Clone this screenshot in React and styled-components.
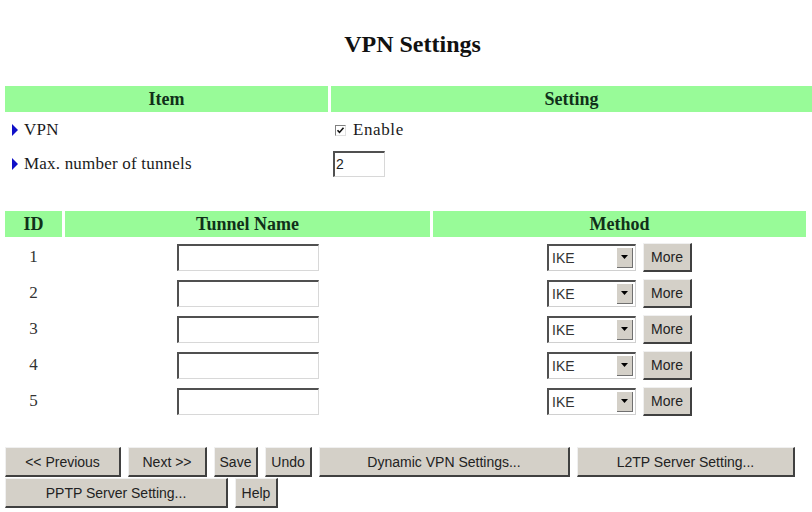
import React from "react";
import styled, { createGlobalStyle } from "styled-components";

const Global = createGlobalStyle`
  html, body { margin: 0; padding: 0; background: #ffffff; }
  body { width: 812px; height: 512px; overflow: hidden; font-family: "Liberation Serif", "Times New Roman", serif; color: #1a1a1a; }
`;

const Page = styled.div`
  display: flex;
  flex-direction: column;
  padding-left: 5px;
`;

const Title = styled.h1`
  margin: 31px 0 0 0;
  padding-left: 8px;
  height: 26px;
  line-height: 26px;
  text-align: center;
  font-size: 24px;
  font-weight: bold;
  font-family: "Liberation Serif", serif;
  color: #111;
`;

const HeaderBar = styled.div`
  display: grid;
  grid-template-columns: ${(p) => p.$cols};
  column-gap: 3px;
  width: ${(p) => p.$w}px;
  margin-top: ${(p) => p.$top}px;
`;

const HeadCell = styled.div`
  height: 26px;
  line-height: 26px;
  background: #98fb98;
  text-align: center;
  font-weight: bold;
  font-size: 18px;
  color: #10301a;
`;

const SettingRow = styled.div`
  display: grid;
  grid-template-columns: 326px 1fr;
  height: 34px;
  align-items: center;
  &:first-of-type { margin-top: 1px; }
`;

const ItemLabel = styled.div`
  display: flex;
  align-items: center;
  gap: 6px;
  padding-left: 7px;
  font-size: 17px;
  color: #1a1a1a;
  letter-spacing: 0.2px;
`;

const Arrow = styled.span`
  width: 0;
  height: 0;
  border-top: 6px solid transparent;
  border-bottom: 6px solid transparent;
  border-left: 6px solid #1010c8;
`;

const SettingCell = styled.div`
  display: flex;
  align-items: center;
  padding-left: ${(p) => p.$pad}px;
  gap: 7px;
  font-size: 17px;
  letter-spacing: 0.6px;
`;

const CheckBox = styled.span`
  width: 11px;
  height: 11px;
  box-sizing: border-box;
  border-top: 1px solid #808080;
  border-left: 1px solid #808080;
  border-right: 1px solid #e0e0e0;
  border-bottom: 1px solid #e0e0e0;
  background: #fff;
  display: flex;
  align-items: center;
  justify-content: center;
`;

const TextBox = styled.div`
  box-sizing: border-box;
  width: ${(p) => p.$w}px;
  height: ${(p) => p.$h}px;
  background: #fff;
  border-top: 2px solid #505050;
  border-left: 2px solid #505050;
  border-right: 1px solid #d8d8d8;
  border-bottom: 1px solid #d8d8d8;
  font-family: "Liberation Sans", Arial, sans-serif;
  font-size: 14px;
  line-height: 22px;
  padding-left: 1px;
  color: #222;
`;

const Tunnels = styled.div`
  display: flex;
  flex-direction: column;
  margin-top: 2px;
  width: 801px;
`;

const TunnelRow = styled.div`
  display: grid;
  grid-template-columns: 57px 365px 373px;
  column-gap: 3px;
  height: 36px;
  align-items: center;
`;

const IdCell = styled.div`
  text-align: center;
  font-size: 17px;
  color: #333;
`;

const Center = styled.div`
  display: flex;
  justify-content: center;
  align-items: center;
  gap: 7px;
`;

const Select = styled.div`
  box-sizing: border-box;
  width: 89px;
  height: 27px;
  display: flex;
  align-items: stretch;
  background: #fff;
  border-top: 2px solid #505050;
  border-left: 2px solid #505050;
  border-right: 1px solid #d0d0d0;
  border-bottom: 1px solid #d0d0d0;
  font-family: "Liberation Sans", Arial, sans-serif;
  font-size: 14px;
  color: #333;
`;

const SelectText = styled.span`
  flex: 1;
  padding-left: 3px;
  line-height: 24px;
`;

const SelectArrow = styled.span`
  width: 15px;
  margin: 2px 2px 2px 0;
  background: #d4d0c8;
  border-right: 1px solid #707070;
  border-bottom: 1px solid #707070;
  display: flex;
  align-items: center;
  justify-content: center;
`;

const Button = styled.button`
  box-sizing: border-box;
  width: ${(p) => p.$w}px;
  height: ${(p) => p.$h || 30}px;
  padding: 0;
  margin: 0;
  background: #d4d0c8;
  border-top: 1px solid #f0f0f0;
  border-left: 1px solid #f0f0f0;
  border-right: 2px solid #404040;
  border-bottom: 2px solid #404040;
  font-family: "Liberation Sans", Arial, sans-serif;
  font-size: 14px;
  color: #222;
  text-align: center;
  cursor: default;
`;

const ButtonBar = styled.div`
  display: flex;
  flex-wrap: wrap;
  column-gap: 7px;
  row-gap: 1px;
  width: 801px;
  margin-top: 28px;
`;

const DownTri = () => (
  <svg width="7" height="4" viewBox="0 0 7 4">
    <path d="M0 0 L7 0 L3.5 4 Z" fill="#000" />
  </svg>
);

const Check = () => (
  <svg width="9" height="9" viewBox="0 0 9 9">
    <path d="M1.5 4.2 L3.5 6.4 L7.5 1.8" stroke="#111" strokeWidth="1.6" fill="none" />
  </svg>
);

const buttons = [
  ["<< Previous", 116],
  ["Next >>", 79],
  ["Save", 44],
  ["Undo", 47],
  ["Dynamic VPN Settings...", 251],
  ["L2TP Server Setting...", 218],
  ["PPTP Server Setting...", 223],
  ["Help", 43],
];

export default function App() {
  return (
    <>
      <Global />
      <Page>
        <Title>VPN Settings</Title>
        <HeaderBar $cols="323px 1fr" $w={807} $top={29}>
          <HeadCell>Item</HeadCell>
          <HeadCell>Setting</HeadCell>
        </HeaderBar>
        <div>
          <SettingRow>
            <ItemLabel>
              <Arrow />
              VPN
            </ItemLabel>
            <SettingCell $pad={4}>
              <CheckBox>
                <Check />
              </CheckBox>
              Enable
            </SettingCell>
          </SettingRow>
          <SettingRow>
            <ItemLabel>
              <Arrow />
              Max. number of tunnels
            </ItemLabel>
            <SettingCell $pad={2}>
              <TextBox $w={52} $h={26}>2</TextBox>
            </SettingCell>
          </SettingRow>
        </div>
        <HeaderBar $cols="57px 365px 373px" $w={801} $top={30}>
          <HeadCell>ID</HeadCell>
          <HeadCell>Tunnel Name</HeadCell>
          <HeadCell>Method</HeadCell>
        </HeaderBar>
        <Tunnels>
          {[1, 2, 3, 4, 5].map((n) => (
            <TunnelRow key={n}>
              <IdCell>{n}</IdCell>
              <Center>
                <TextBox $w={142} $h={27} />
              </Center>
              <Center>
                <Select>
                  <SelectText>IKE</SelectText>
                  <SelectArrow>
                    <DownTri />
                  </SelectArrow>
                </Select>
                <Button $w={49} $h={29}>More</Button>
              </Center>
            </TunnelRow>
          ))}
        </Tunnels>
        <ButtonBar>
          {buttons.map(([label, w]) => (
            <Button key={label} $w={w}>
              {label}
            </Button>
          ))}
        </ButtonBar>
      </Page>
    </>
  );
}
